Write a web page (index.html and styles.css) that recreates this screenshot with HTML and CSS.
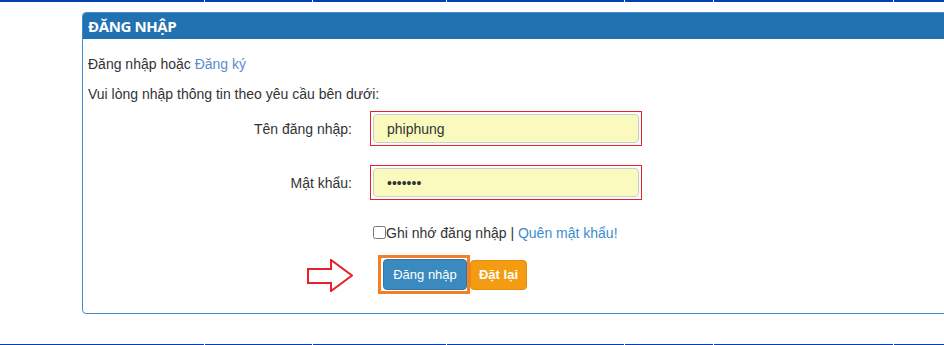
FILE: index.html
```html
<!DOCTYPE html>
<html lang="vi">
<head>
    <meta charset="UTF-8">
    <meta name="viewport" content="width=device-width, initial-scale=1.0">
    <title>Đăng nhập</title>
    <link rel="stylesheet" href="styles.css">
</head>
<body>

    <!-- Top menu strip -->
    <div class="strip">
        <span style="width: 204px"></span>
        <span style="width: 107px"></span>
        <span style="width: 133px"></span>
        <span style="width: 177px"></span>
        <span style="width: 88px"></span>
        <span style="width: 179px"></span>
        <span class="rest"></span>
    </div>

    <!-- Login panel -->
    <div class="panel">
        <div class="panel-head">ĐĂNG NHẬP</div>
        <div class="panel-body">
            <p class="line">Đăng nhập hoặc <a href="#" class="link-reg">Đăng ký</a></p>
            <p class="line intro">Vui lòng nhập thông tin theo yêu cầu bên dưới:</p>

            <form class="login-form" onsubmit="return false">
                <label class="label" for="user">Tên đăng nhập:</label>
                <div class="field-box">
                    <input type="text" id="user" class="field" value="phiphung">
                </div>

                <label class="label" for="pass">Mật khẩu:</label>
                <div class="field-box">
                    <input type="password" id="pass" class="field" value="1234567">
                </div>

                <div></div>
                <div class="remember">
                    <input type="checkbox" id="remember"><label for="remember">Ghi nhớ đăng nhập</label> | <a href="#" class="link-forgot">Quên mật khẩu!</a>
                </div>

                <div class="arrow-cell">
                    <svg class="arrow" width="46" height="33" viewBox="0 0 46 33">
                        <polygon points="1,10 24,10 24,1 45,16.5 24,32 24,24 1,24" fill="#fff" stroke="#e8202a" stroke-width="2"/>
                    </svg>
                </div>
                <div class="actions">
                    <span class="focus-ring"><button class="btn btn-login">Đăng nhập</button></span>
                    <button type="reset" class="btn btn-reset">Đặt lại</button>
                </div>
            </form>
        </div>
    </div>

    <!-- Bottom menu strip -->
    <div class="strip bottom">
        <span style="width: 204px"></span>
        <span style="width: 107px"></span>
        <span style="width: 133px"></span>
        <span style="width: 177px"></span>
        <span style="width: 88px"></span>
        <span style="width: 179px"></span>
        <span class="rest"></span>
    </div>

</body>
</html>
```

FILE: styles.css
```css
* {
    margin: 0;
    padding: 0;
    box-sizing: border-box;
}
body {
    background: #fff;
    color: #333;
    font-family: "Liberation Sans", Arial, sans-serif;
    font-size: 14px;
    overflow: hidden;
    width: 944px;
}
a {
    text-decoration: none;
}
/* Menu strips */
.strip {
    display: flex;
    gap: 1px;
    height: 2px;
}
.strip span {
    flex: none;
    background: #0041b0;
}
.strip .rest {
    flex: 1;
}
.strip.bottom {
    margin-top: 30px;
}
/* Panel */
.panel {
    margin: 10px 0 0 82px;
    width: 900px;
    border: 1px solid #3d8cd0;
    border-radius: 4px;
    overflow: hidden;
}
.panel-head {
    height: 26px;
    line-height: 26px;
    padding-left: 5px;
    background: #2272b2;
    color: #fff;
    font-family: "Open Sans", sans-serif;
    font-size: 15px;
    font-weight: bold;
    letter-spacing: -0.4px;
}
.panel-body {
    padding: 16px 5px 19px;
}
.line {
    line-height: 18px;
    margin-bottom: 12px;
}
.line.intro {
    margin-bottom: 8px;
}
.link-reg {
    color: #5b8ccd;
}
/* Form */
.login-form {
    display: grid;
    grid-template-columns: 264px 290px;
    column-gap: 18px;
    row-gap: 19px;
    align-items: center;
}
.label {
    text-align: right;
}
.field-box {
    border: 1px solid #e8202a;
    padding: 2px;
    width: 272px;
}
.field {
    display: block;
    width: 266px;
    height: 29px;
    padding-left: 13px;
    background: #fafabf;
    border: 1px solid #ccc;
    border-radius: 4px;
    font-family: "Liberation Sans", Arial, sans-serif;
    font-size: 14px;
    color: #333;
    outline: none;
}
.remember {
    margin-top: 5px;
    line-height: 18px;
    white-space: nowrap;
}
.remember input {
    margin: 0 0 0 3px;
    width: 13px;
    height: 13px;
    vertical-align: -1px;
}
.link-forgot {
    color: #3b8bd1;
}
.arrow-cell {
    justify-self: end;
    margin-top: -4px;
    margin-right: -1px;
}
.arrow {
    display: block;
}
.actions {
    display: flex;
    align-items: center;
    margin-top: -6px;
    margin-left: 8px;
}
.focus-ring {
    display: block;
    border: 3px solid #f47f24;
    padding: 1px 0 1px 2px;
}
.btn {
    display: block;
    height: 31px;
    border-radius: 4px;
    color: #fff;
    font-family: "Liberation Sans", Arial, sans-serif;
    font-size: 13px;
    cursor: pointer;
}
.btn-login {
    width: 84px;
    background: #3a8abf;
    border: 1px solid #2f78ad;
}
.btn-reset {
    width: 57px;
    height: 30px;
    background: #f39c12;
    border: 1px solid #e08e0b;
    font-weight: bold;
}
```
